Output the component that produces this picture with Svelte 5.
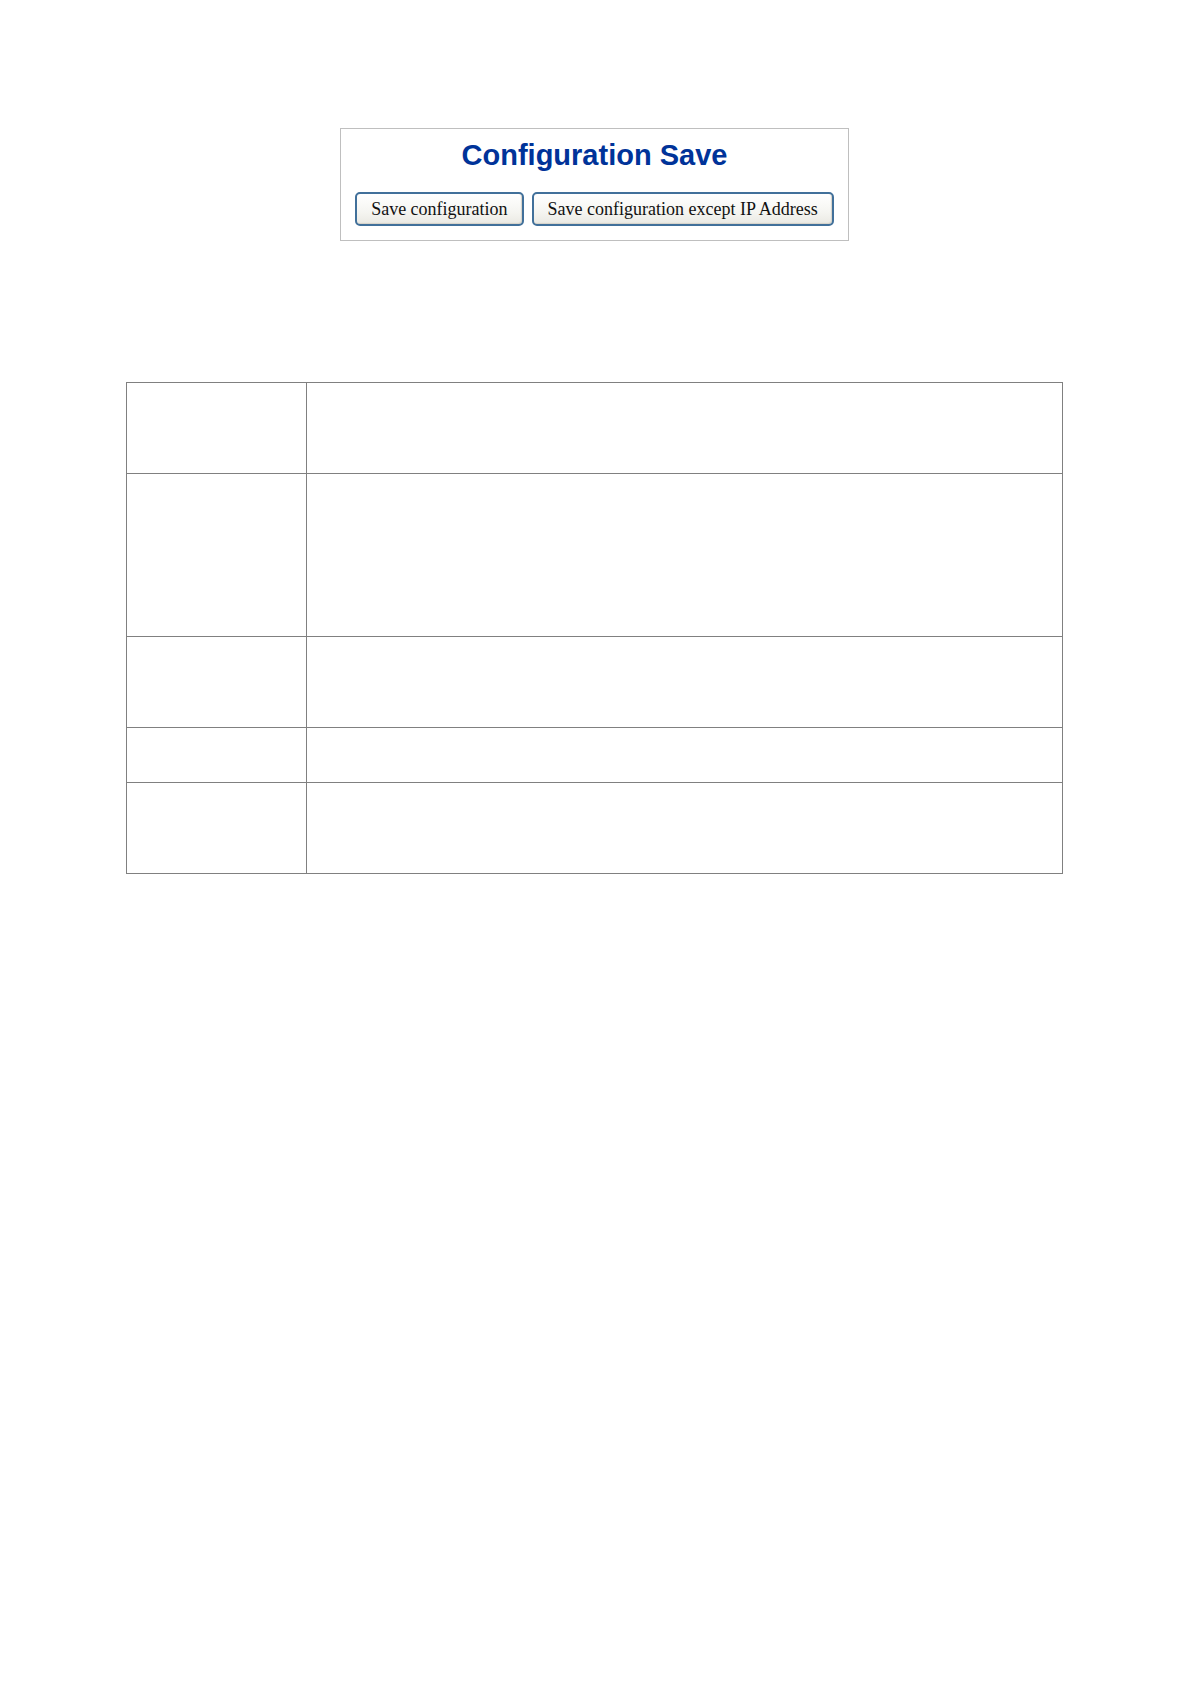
<script>
  const rows = [2, 4, 2, 1, 2];
</script>

<main class="page">
  <section class="panel" aria-labelledby="title">
    <h1 id="title">Configuration Save</h1>
    <div class="actions">
      <button type="button">Save configuration</button>
      <button type="button">Save configuration except IP Address</button>
    </div>
  </section>

  <table>
    <tbody>
      {#each rows as lines}
        <tr class="lines-{lines}">
          <td class="label"></td>
          <td></td>
        </tr>
      {/each}
    </tbody>
  </table>
</main>

<style>
  :global(body) {
    background: #fff;
  }

  .page {
    padding: 128px 128px 128px 126px;
  }

  .panel {
    box-sizing: border-box;
    width: fit-content;
    margin: 0 auto 141px;
    padding: 8px 14px 14px;
    border: 1px solid #bfbfbf;
  }

  h1 {
    margin: 0 0 19px;
    color: #003399;
    font: bold 29px/36px "Liberation Sans", Arial, sans-serif;
    text-align: center;
  }

  .actions {
    display: flex;
    gap: 8px;
  }

  button {
    height: 34px;
    padding: 0 14px;
    border: 2px solid #41709a;
    border-radius: 5px;
    background: linear-gradient(#fff, #f5f5f1 60%, #eae9e3);
    box-shadow: inset -1px -1px 1px #d6d2c8;
    color: #111;
    font: 18px/28px "Liberation Serif", "Times New Roman", serif;
    white-space: nowrap;
  }

  table {
    width: 100%;
    table-layout: fixed;
    border-spacing: 0;
    border-top: 1px solid #808080;
    border-left: 1px solid #808080;
  }

  td {
    box-sizing: border-box;
    padding: 9px;
    border-right: 1px solid #808080;
    border-bottom: 1px solid #808080;
  }

  .label {
    width: 180px;
  }

  .lines-1 {
    height: 55px;
  }

  .lines-2 {
    height: 91px;
  }

  .lines-4 {
    height: 163px;
  }
</style>
